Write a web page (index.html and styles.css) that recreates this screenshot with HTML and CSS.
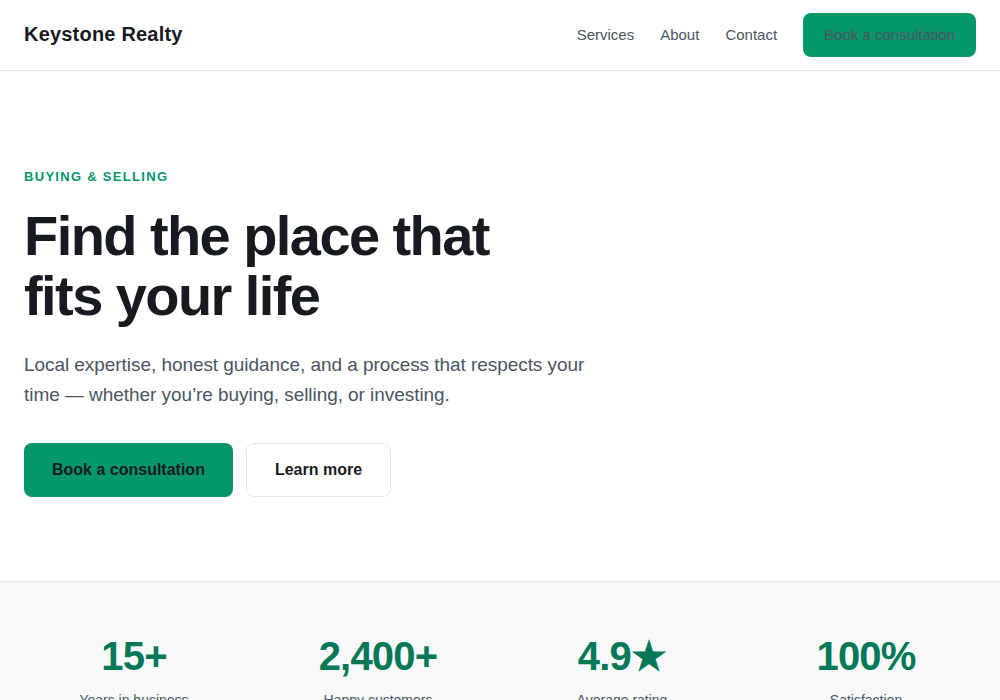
FILE: index.html
```html
<!DOCTYPE html>
<html lang="en">
<head>
  <meta charset="UTF-8" />
  <meta name="viewport" content="width=device-width, initial-scale=1.0"/>
  <title>Keystone Realty</title>
  <link rel="stylesheet" href="styles.css">
</head>
<body>
  <header class="topbar">
    <a href="#" class="brand">Keystone Realty</a>
    <nav class="nav">
      <a href="#">Services</a>
      <a href="#">About</a>
      <a href="#">Contact</a>
      <a href="#" class="nav-cta">Book a consultation</a>
    </nav>
  </header>

  <section class="hero">
    <p class="eyebrow">Buying &amp; Selling</p>
    <h1>Find the place that fits your life</h1>
    <p class="lead">Local expertise, honest guidance, and a process that respects your time — whether you’re buying, selling, or investing.</p>
    <div class="actions">
      <a href="#" class="btn btn-primary">Book a consultation</a>
      <a href="#" class="btn btn-outline">Learn more</a>
    </div>
  </section>

  <section class="stats">
    <div class="stat">
      <div class="stat-num">15+</div>
      <div class="stat-label">Years in business</div>
    </div>
    <div class="stat">
      <div class="stat-num">2,400+</div>
      <div class="stat-label">Happy customers</div>
    </div>
    <div class="stat">
      <div class="stat-num">4.9★</div>
      <div class="stat-label">Average rating</div>
    </div>
    <div class="stat">
      <div class="stat-num">100%</div>
      <div class="stat-label">Satisfaction</div>
    </div>
  </section>
</body>
</html>
```

FILE: styles.css
```css
:root {
  --green: #059669;
  --green-dark: #047857;
  --ink: #171a21;
  --muted: #4b5563;
  --line: #e5e7eb;
  --soft: #f7f8fa;
  --radius: 8px;
}

* {
  box-sizing: border-box;
}

body {
  margin: 0;
  background: white;
  color: var(--ink);
  font-family: 'Liberation Sans', Arial, sans-serif;
}

a {
  text-decoration: none;
}

.topbar {
  display: flex;
  justify-content: space-between;
  align-items: center;
  height: 71px;
  padding: 0 24px 1px;
  border-bottom: 1px solid var(--line);
}

.brand {
  font-size: 20px;
  font-weight: 700;
  letter-spacing: 0.01em;
  color: var(--ink);
}

.nav {
  display: flex;
  align-items: center;
  gap: 26px;
}

.nav a {
  font-size: 15px;
  color: var(--muted);
}

.nav .nav-cta {
  display: flex;
  align-items: center;
  height: 44px;
  padding: 0 21px;
  background: var(--green);
  border-radius: var(--radius);
}

.hero {
  padding: 96px 24px 84px;
}

.eyebrow {
  margin: 0 0 19px;
  font-size: 13px;
  line-height: 20px;
  font-weight: 700;
  letter-spacing: 0.1em;
  text-transform: uppercase;
  color: var(--green);
}

.hero h1 {
  margin: 0;
  max-width: 540px;
  font-size: 56px;
  line-height: 60px;
  font-weight: 700;
  letter-spacing: -0.028em;
  color: var(--ink);
}

.lead {
  margin: 24px 0 32px;
  max-width: 580px;
  font-size: 19px;
  line-height: 1.6;
  letter-spacing: -0.003em;
  color: var(--muted);
}

.actions {
  display: flex;
  gap: 13px;
}

.btn {
  display: inline-block;
  padding: 17px 28px;
  font-size: 16px;
  line-height: 20px;
  font-weight: 700;
  color: var(--ink);
  border-radius: var(--radius);
}

.btn-primary {
  background: var(--green);
}

.btn-outline {
  padding: 16px 28px;
  background: white;
  border: 1px solid var(--line);
}

.stats {
  display: grid;
  grid-template-columns: repeat(4, 1fr);
  gap: 24px;
  padding: 50px 24px 40px;
  background: var(--soft);
  border-top: 1px solid var(--line);
  text-align: center;
}

.stat-num {
  font-size: 40px;
  line-height: 48px;
  font-weight: 700;
  letter-spacing: -0.02em;
  color: var(--green-dark);
}

.stat-label {
  margin-top: 10px;
  font-size: 14px;
  line-height: 20px;
  color: var(--muted);
}
```
